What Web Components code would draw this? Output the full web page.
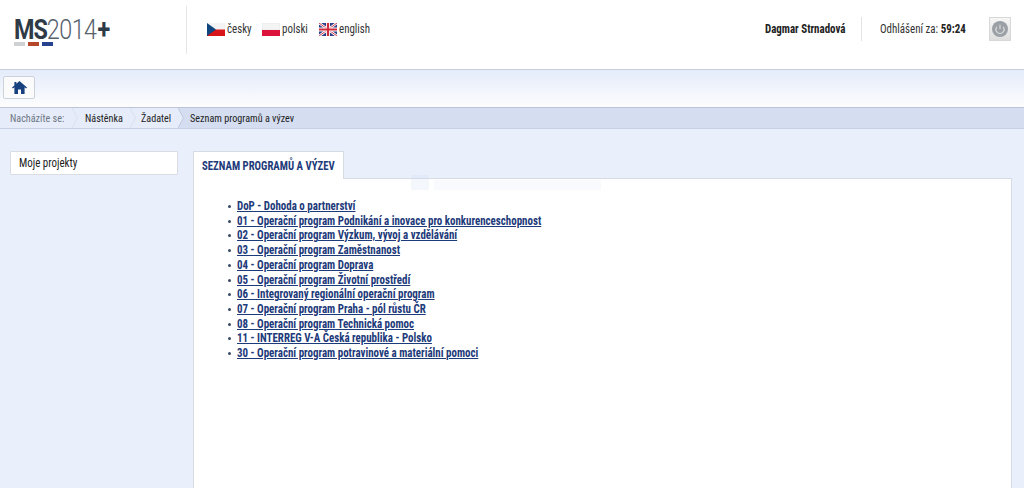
<!DOCTYPE html>
<html lang="cs"><head><meta charset="utf-8"><title>MS2014+</title>
<style>
html,body{margin:0;height:488px;overflow:hidden;background:#e9effb;font-family:Roboto,"Liberation Sans",sans-serif}
</style></head><body>
<ms-app></ms-app>
<script>
function def(name,html){
  customElements.define(name,class extends HTMLElement{
    constructor(){super();this.attachShadow({mode:'open'}).innerHTML=html;}
  });
}
const F='Roboto,"Liberation Sans",sans-serif';
/* narrow text: the reference face is narrower than the condensed width of Roboto */
const N='.n{display:block;font-stretch:75%;transform:scaleX(.875);transform-origin:0 50%;white-space:nowrap}';
def('ms-logo',`<style>
:host{display:block;width:97px;line-height:1;margin-top:3px;margin-left:-.5px}
.t{font:300 27px/27px ${F};display:flex;height:27px;color:#56616c;letter-spacing:-.6px;transform:scaleX(.865);transform-origin:0 50%;white-space:nowrap}
b{font-weight:700;color:#2e3a46;letter-spacing:-1.2px}
b.p{letter-spacing:0;margin-left:1px}
.bars{display:flex;gap:3px;margin-top:-2px;margin-left:.5px}
i{width:11px;height:4px;display:block}
</style><div class="t"><b>MS</b><span>2014</span><b class="p">+</b></div>
<div class="bars"><i style="background:#cfd0d2"></i><i style="background:#b5482a"></i><i style="background:#27428f"></i></div>`);
def('ms-flag',`<style>${N}
:host{display:flex;align-items:center;gap:2px;font:12.5px/16px ${F};color:#333;flex:none}
.f{width:18px;height:13px;display:flex;flex:none}
::slotted(svg){width:18px;height:13px;display:block}
</style><span class="f"><slot name="f"></slot></span><span class="n"><slot></slot></span>`);
def('ms-langs',`<style>:host{display:flex;align-items:center}</style><slot></slot>`);
def('ms-header',`<style>${N}
:host{display:flex;height:70px;background:#fff;border-bottom:1px solid #c6cfdc;align-items:flex-start;padding:6px 13px 0 14px;box-sizing:border-box}
.logo{width:173px;height:48px;display:flex;align-items:center;border-right:1px solid #e6e6e6;margin-right:20px;flex:none;box-sizing:border-box}
.langs{flex:1;display:flex;height:46px;align-items:center}
.user{font:700 12.5px/16px ${F};color:#222;width:97px;box-sizing:border-box;border-right:1px solid #e3e3e3;height:24px;display:flex;align-items:center;margin-top:11px;flex:none}
.time{font:12.5px/24px ${F};color:#333;width:86px;margin:11px 23px 0 18px;height:24px;flex:none}
.time b{color:#222}
.pw{width:22px;height:24px;background:linear-gradient(#f6f6f6,#dedede);border:1px solid #d8d8d8;box-sizing:border-box;display:flex;align-items:center;justify-content:center;margin-top:11px;flex:none}
</style>
<div class="logo"><slot name="logo"></slot></div><div class="langs"><slot name="langs"></slot></div>
<div class="user"><span class="n">Dagmar Strnadová</span></div><div class="time"><span class="n">Odhlášení za: <b>59:24</b></span></div>
<div class="pw"><svg width="18" height="18" viewBox="0 0 18 18"><circle cx="9" cy="9" r="8" fill="#9aa0a5"/><path d="M5.900 6.900a4 4 0 1 0 6.200 0" fill="none" stroke="#d5d8da" stroke-width="1.300"/><path d="M9 4.800V9" stroke="#d5d8da" stroke-width="1.300"/></svg></div>`);
def('ms-toolbar',`<style>
:host{display:flex;align-items:flex-start;height:37px;padding:6px 0 0 3px;box-sizing:border-box;background:linear-gradient(#e4ebfa,#f2f5fc 55%,#fdfdfe)}
button{all:unset;box-sizing:border-box;width:32px;height:23px;background:#fbfbfb;border:1px solid #ccd2dc;border-radius:2px;display:flex;align-items:center;justify-content:center}
</style><button aria-label="Domů"><svg width="15" height="13" viewBox="0 0 15 13"><path fill="#17407f" d="M7.500 0 15 6.600l-.9 1L12.600 6.300V13H9V8.600H6V13H2.400V6.300L.9 7.600 0 6.600 2.400 4.500V1h2v1.800z"/></svg></button>`);
def('ms-crumb',`<style>${N}
:host{display:flex;align-items:center;position:relative;height:100%;box-sizing:border-box;color:#222;font:11.6px/16px ${F};flex:none}
svg{position:absolute;right:-6px;top:0;width:6px;height:100%;display:var(--chev,block)}
</style><span class="n"><slot></slot></span><svg viewBox="0 0 6 22" preserveAspectRatio="none"><path d="M0 0 5.500 11 0 22" fill="var(--fill,#e6ecf9)" stroke="var(--edge,#d8dfee)"/></svg>`);
def('ms-breadcrumb',`<style>
:host{display:flex;height:22px;box-sizing:border-box;background:#d5def1;border-top:1px solid #bcc6d8;border-bottom:1px solid #c7d0e1}
.first{background:#e6ecf9;display:flex}
</style><div class="first"><slot name="a"></slot></div><slot></slot>`);
def('ms-side',`<style>${N}
:host{display:block;width:168px;height:24px;box-sizing:border-box;background:#fff;border:1px solid #d9dce3;border-radius:1px;padding:0 7.500px;font:12.5px/22px ${F};color:#222;flex:none}
</style><span class="n"><slot></slot></span>`);
def('ms-panel',`<style>${N}
:host{display:flex;flex-direction:column;flex:1;min-width:0;height:338px}
.tab{align-self:flex-start;width:151px;height:28px;margin-bottom:-1px;box-sizing:border-box;background:#fff;border:1px solid #d6dae2;border-bottom:0;padding:0 8px;font:700 12.3px/28px ${F};color:#1d3a7a;position:relative;z-index:1}
.body{flex:1;background:#fff;border:1px solid #d6dae2;padding:20px 0 0 43px;position:relative}
.ghost{position:absolute;left:217px;top:-5px;width:190px;height:16px;display:flex;align-items:flex-end;gap:5px}
.ghost i{width:18px;height:15px;background:rgba(205,222,245,.22);display:block;flex:none}
.ghost u{height:10px;flex:1;background:#f8fafd;display:block}
</style><div class="tab"><span class="n"><slot name="title"></slot></span></div><div class="body"><div class="ghost"><i></i><u></u></div><slot></slot></div>`);
def('ms-list',`<style>:host{display:block}ul{margin:0;padding:0;list-style:none}</style><ul><slot></slot></ul>`);
def('ms-item',`<style>${N}
:host{display:block;position:relative;height:14.72px;font:700 12.5px/14.72px ${F}}
:host::before{content:"";position:absolute;left:-9.500px;top:6px;width:3px;height:3px;border-radius:50%;background:#3a4a66}
a{color:#1d3a7a;text-decoration:underline;text-underline-offset:1px}
</style><a class="n" href="#"><slot></slot></a>`);
def('ms-app',`<style>
:host{display:block;width:1024px}
main{display:flex;gap:15px;padding:22px 12px 0 10px;align-items:flex-start}
</style>
<ms-header>
  <ms-logo slot="logo"></ms-logo>
  <ms-langs slot="langs">
    <ms-flag style="width:55px"><svg slot="f" viewBox="0 0 18 13"><rect width="18" height="6.500" fill="#f4f4f4"/><rect y="6.500" width="18" height="6.500" fill="#d7141a"/><path d="M0 0 9 6.500 0 13z" fill="#11457e"/></svg>česky</ms-flag>
    <ms-flag style="width:57px"><svg slot="f" viewBox="0 0 18 13"><rect width="18" height="7" fill="#f4f4f4" stroke="#ddd" stroke-width=".5"/><rect y="7" width="18" height="6" fill="#dc143c"/></svg>polski</ms-flag>
    <ms-flag style="width:60px"><svg slot="f" viewBox="0 0 18 13"><rect width="18" height="13" fill="#2b3f87"/><path d="M0 0 18 13M18 0 0 13" stroke="#fff" stroke-width="2.600"/><path d="M0 0 18 13M18 0 0 13" stroke="#cf2b3c" stroke-width=".9"/><path d="M9 0V13M0 6.500H18" stroke="#fff" stroke-width="4"/><path d="M9 0V13M0 6.500H18" stroke="#cf2b3c" stroke-width="2.200"/></svg>english</ms-flag>
  </ms-langs>
</ms-header>
<ms-toolbar></ms-toolbar>
<ms-breadcrumb>
  <ms-crumb slot="a" style="color:#6d7684;width:72px;padding-left:10px">Nacházíte se:</ms-crumb>
  <ms-crumb slot="a" style="width:58px;padding-left:13px">Nástěnka</ms-crumb>
  <ms-crumb slot="a" style="width:48px;padding-left:11px;--edge:#bcc7dc">Žadatel</ms-crumb>
  <ms-crumb style="padding-left:12px;--chev:none">Seznam programů a výzev</ms-crumb>
</ms-breadcrumb>
<main>
  <ms-side>Moje projekty</ms-side>
  <ms-panel>
    <span slot="title">SEZNAM PROGRAMŮ A VÝZEV</span>
    <ms-list>
      <ms-item>DoP - Dohoda o partnerství</ms-item>
      <ms-item>01 - Operační program Podnikání a inovace pro konkurenceschopnost</ms-item>
      <ms-item>02 - Operační program Výzkum, vývoj a vzdělávání</ms-item>
      <ms-item>03 - Operační program Zaměstnanost</ms-item>
      <ms-item>04 - Operační program Doprava</ms-item>
      <ms-item>05 - Operační program Životní prostředí</ms-item>
      <ms-item>06 - Integrovaný regionální operační program</ms-item>
      <ms-item>07 - Operační program Praha - pól růstu ČR</ms-item>
      <ms-item>08 - Operační program Technická pomoc</ms-item>
      <ms-item>11 - INTERREG V-A Česká republika - Polsko</ms-item>
      <ms-item>30 - Operační program potravinové a materiální pomoci</ms-item>
    </ms-list>
  </ms-panel>
</main>`);
</script>
</body></html>
